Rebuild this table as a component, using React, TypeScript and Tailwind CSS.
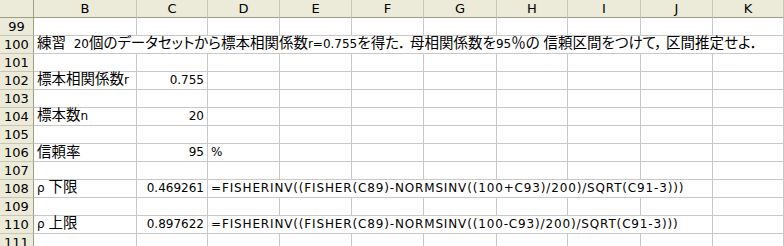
const COLS = ["B", "C", "D", "E", "F", "G", "H", "I", "J", "K"];

const CJK = /[\u3000-\u30ff\u4e00-\u9fff\uff00-\uffef]/;
const RUNS = /[\u3000-\u30ff\u4e00-\u9fff\uff00-\uffef]+|[^\u3000-\u30ff\u4e00-\u9fff\uff00-\uffef]+/g;

// Mixed Japanese / Latin cell text: kana and kanji get the CJK face, proportional and a bit larger
function Txt({ s, wide }: { s: string; wide?: boolean }) {
  const parts = s.match(RUNS) ?? [];
  return (
    <span className="whitespace-pre">
      {parts.map((p, i) =>
        CJK.test(p) ? (
          <span key={i} className="font-['Noto_Sans_CJK_JP',sans-serif] text-[14.5px] [font-feature-settings:'palt']">
            {p}
          </span>
        ) : (
          <span key={i} className={wide ? "text-[12px] tracking-[0.85px]" : "text-[12px]"}>
            {p}
          </span>
        )
      )}
    </span>
  );
}

type Row = {
  n: number;
  b?: string;
  c?: string;
  d?: string;
  span?: string; // text in B running across the whole row
  formula?: string; // text in D running to the right
};

const rows: Row[] = [
  { n: 99 },
  { n: 100, span: "練習  20個のデータセットから標本相関係数r=0.755を得た． 母相関係数を95％の 信頼区間をつけて， 区間推定せよ．" },
  { n: 101 },
  { n: 102, b: "標本相関係数r", c: "0.755" },
  { n: 103 },
  { n: 104, b: "標本数n", c: "20" },
  { n: 105 },
  { n: 106, b: "信頼率", c: "95", d: "%" },
  { n: 107 },
  { n: 108, b: "ρ 下限", c: "0.469261", formula: "=FISHERINV((FISHER(C89)-NORMSINV((100+C93)/200)/SQRT(C91-3)))" },
  { n: 109 },
  { n: 110, b: "ρ 上限", c: "0.897622", formula: "=FISHERINV((FISHER(C89)-NORMSINV((100-C93)/200)/SQRT(C91-3)))" },
  { n: 111 },
];

const cell = "border-r border-b border-[#c8c8c8] flex items-end pb-[1px] leading-[16px] whitespace-nowrap overflow-visible";

function Empty() {
  return <div className={cell} />;
}

function RowCells({ r }: { r: Row }) {
  const head = (
    <div className="bg-[#ecead9] border-r border-b border-r-[#9e9b86] border-b-[#c9c6b3] flex items-center justify-center text-[13px] leading-none">
      {r.n}
    </div>
  );
  if (r.span) {
    return (
      <>
        {head}
        <div className={`${cell} col-span-10 pl-[3px]`}>
          <Txt s={r.span} />
        </div>
      </>
    );
  }
  return (
    <>
      {head}
      <div className={`${cell} pl-[3px]`}>{r.b && <Txt s={r.b} />}</div>
      <div className={`${cell} justify-end pr-[3px]`}>{r.c && <Txt s={r.c} />}</div>
      {r.formula ? (
        <>
          <div className={`${cell} col-span-7 pl-[3px]`}>
            <Txt s={r.formula} wide />
          </div>
          <Empty />
        </>
      ) : (
        <>
          <div className={`${cell} pl-[3px]`}>{r.d && <Txt s={r.d} />}</div>
          {COLS.slice(3).map((c) => (
            <Empty key={c} />
          ))}
        </>
      )}
    </>
  );
}

export default function App() {
  return (
    <div className="w-[784px] h-[246px] overflow-hidden bg-white text-black font-['DejaVu_Sans','Noto_Sans_CJK_JP',sans-serif]">
      <div className="grid grid-cols-[34px_103px_71px_72px_72px_72px_73px_71px_73px_72px_71px] auto-rows-[18px]">
        {/* column header strip */}
        <div className="bg-[#ecead9] border-r border-b border-[#9e9b86]" />
        {COLS.map((c) => (
          <div
            key={c}
            className="bg-[#ecead9] border-r border-b border-r-[#c9c6b3] border-b-[#9e9b86] flex items-center justify-center text-[13px] leading-none"
          >
            {c}
          </div>
        ))}
        {rows.map((r) => (
          <RowCells key={r.n} r={r} />
        ))}
      </div>
    </div>
  );
}
